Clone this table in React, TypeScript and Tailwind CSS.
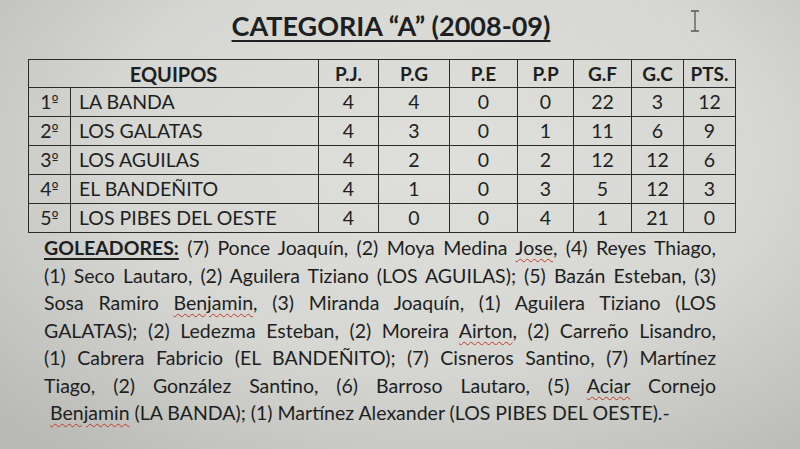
import React from 'react'

/* ─── Datos de la tabla ─────────────────────────────────────── */
const COLS = ['P.J.', 'P.G', 'P.E', 'P.P', 'G.F', 'G.C', 'PTS.']

const ROWS = [
  { pos: '1', team: 'LA BANDA', v: [4, 4, 0, 0, 22, 3, 12] },
  { pos: '2', team: 'LOS GALATAS', v: [4, 3, 0, 1, 11, 6, 9] },
  { pos: '3', team: 'LOS AGUILAS', v: [4, 2, 0, 2, 12, 12, 6] },
  { pos: '4', team: 'EL BANDEÑITO', v: [4, 1, 0, 3, 5, 12, 3] },
  { pos: '5', team: 'LOS PIBES DEL OESTE', v: [4, 0, 0, 4, 1, 21, 0] },
]

function Typo({ children }: { children: React.ReactNode }) {
  return (
    <span className="underline decoration-wavy decoration-[#c0392b] decoration-1 underline-offset-[3px]">
      {children}
    </span>
  )
}

function Line({ children, last }: { children: React.ReactNode; last?: boolean }) {
  return (
    <p className={last ? 'h-[27.5px] whitespace-nowrap text-left pl-[6px]' : 'h-[27.5px] whitespace-nowrap text-justify [text-align-last:justify]'}>
      {children}
    </p>
  )
}

export default function App() {
  return (
    <div
      className="w-[800px] h-[449px] overflow-hidden text-[#1d1f22] bg-[radial-gradient(ellipse_75%_85%_at_55%_35%,#dfdfdb_0%,#d6d6d2_55%,#b9b9b5_100%)]"
      style={{ fontFamily: 'Lato, "Open Sans", sans-serif' }}
    >
      {/* Título */}
      <div className="relative pt-[9px] h-[59px]">
        <h1 className="text-center text-[27px] font-bold leading-[34px] underline decoration-2 underline-offset-[4px] pr-[18px]">
          CATEGORIA “A” (2008-09)
        </h1>
        {/* cursor de texto */}
        <svg className="absolute left-[690px] top-[10px]" width="10" height="22" viewBox="0 0 10 22" aria-hidden>
          <path d="M1 1h8M5 1v20M1 21h8" stroke="#55575a" strokeWidth="1.3" fill="none" />
        </svg>
      </div>

      {/* Tabla */}
      <div className="pl-[28px]">
        <table className="border-collapse table-fixed w-[707px] text-[19.5px]">
          <colgroup>
            <col className="w-[42px]" />
            <col className="w-[248px]" />
            <col className="w-[60px]" />
            <col className="w-[71px]" />
            <col className="w-[68px]" />
            <col className="w-[56px]" />
            <col className="w-[58px]" />
            <col className="w-[52px]" />
            <col className="w-[52px]" />
          </colgroup>
          <thead>
            <tr className="h-[28px]">
              <th colSpan={2} className="border-[1.5px] border-[#2b2b2b] font-bold text-[20px] leading-none">
                EQUIPOS
              </th>
              {COLS.map(c => (
                <th key={c} className="border-[1.5px] border-[#2b2b2b] font-bold text-[19px] leading-none">
                  {c}
                </th>
              ))}
            </tr>
          </thead>
          <tbody>
            {ROWS.map(r => (
              <tr key={r.pos} className="h-[29px]">
                <td className="border-[1.5px] border-[#2b2b2b] text-center leading-none">
                  {r.pos}
                  <span className="font-['DejaVu_Sans',sans-serif] text-[15px] align-[3px]">º</span>
                </td>
                <td className="border-[1.5px] border-[#2b2b2b] pl-[8px] leading-none">{r.team}</td>
                {r.v.map((n, i) => (
                  <td key={i} className="border-[1.5px] border-[#2b2b2b] text-center leading-none">
                    {n}
                  </td>
                ))}
              </tr>
            ))}
          </tbody>
        </table>
      </div>

      {/* Goleadores */}
      <div className="pl-[44px] w-[716px] pt-[1px] text-[19.5px] leading-[27.5px]">
        <Line>
          <b className="underline decoration-2 underline-offset-[3px]">GOLEADORES:</b> (7) Ponce Joaquín, (2) Moya Medina <Typo>Jose</Typo>, (4) Reyes Thiago,
        </Line>
        <Line>(1) Seco Lautaro, (2) Aguilera Tiziano (LOS AGUILAS); (5) Bazán Esteban, (3)</Line>
        <Line>
          Sosa Ramiro <Typo>Benjamin</Typo>, (3) Miranda Joaquín, (1) Aguilera Tiziano (LOS
        </Line>
        <Line>
          GALATAS); (2) Ledezma Esteban, (2) Moreira <Typo>Airton</Typo>, (2) Carreño Lisandro,
        </Line>
        <Line>(1) Cabrera Fabricio (EL BANDEÑITO); (7) Cisneros Santino, (7) Martínez</Line>
        <Line>
          Tiago, (2) González Santino, (6) Barroso Lautaro, (5) <Typo>Aciar</Typo> Cornejo
        </Line>
        <Line last>
          <Typo>Benjamin</Typo> (LA BANDA); (1) Martínez Alexander (LOS PIBES DEL OESTE).-
        </Line>
      </div>
    </div>
  )
}
